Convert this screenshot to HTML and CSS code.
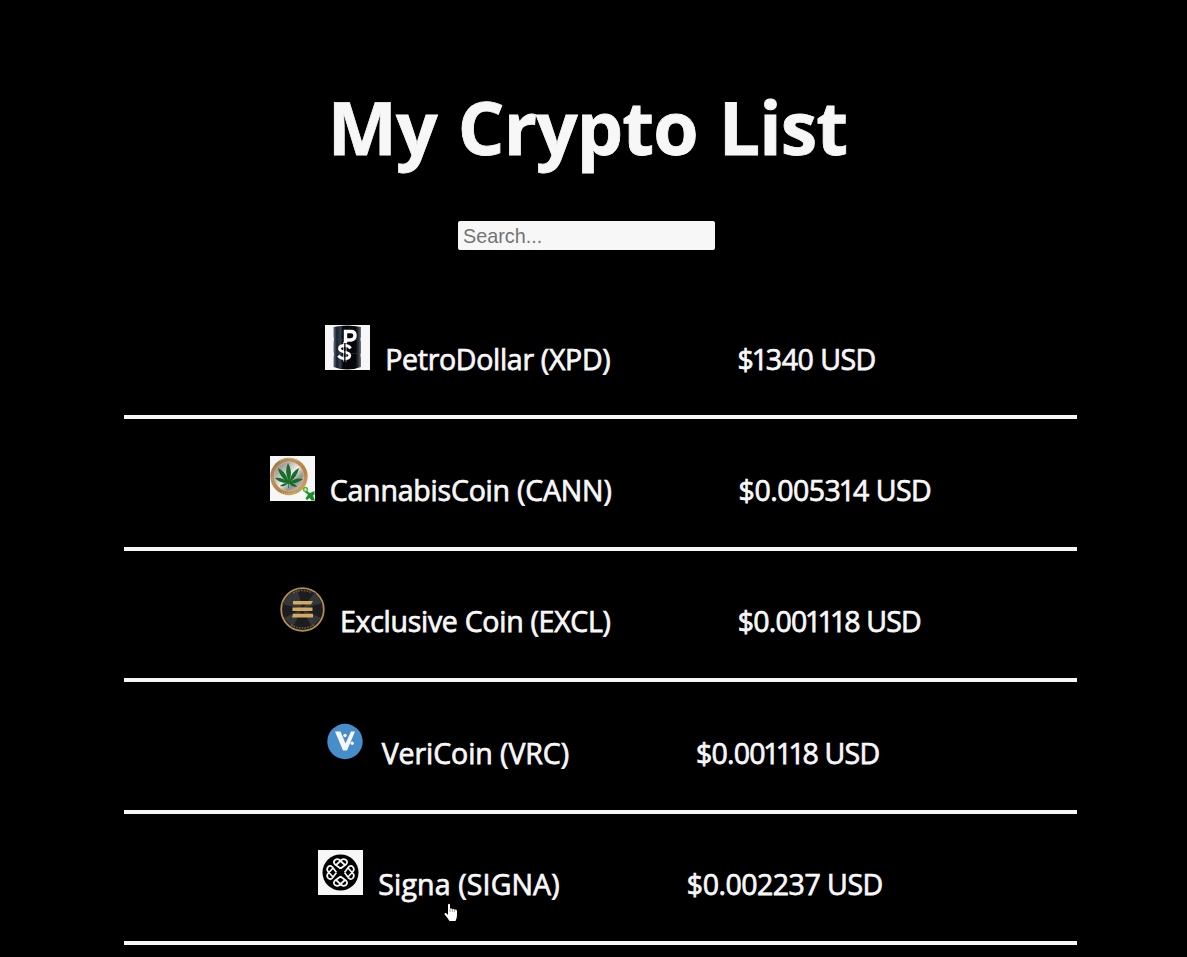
FILE: index.html
```html
<!DOCTYPE html>
<html lang="en">
<head>
<meta charset="utf-8">
<title>My Crypto List</title>
<link rel="stylesheet" href="styles.css">
</head>
<body>
<main class="page">
  <h1 class="title">My Crypto List</h1>
  <input class="search" type="text" placeholder="Search...">
  <ul class="coins">
    <li class="coin">
      <svg class="logo" viewBox="0 0 45 45">
        <defs><linearGradient id="barrel"><stop offset="0" stop-color="#657482"/><stop offset=".12" stop-color="#182028"/><stop offset=".25" stop-color="#304050"/><stop offset=".35" stop-color="#05070a"/><stop offset=".8" stop-color="#05070a"/><stop offset=".92" stop-color="#303a43"/><stop offset="1" stop-color="#777"/></linearGradient></defs>
        <rect width="45" height="45" fill="#f7f7f7"/>
        <path d="M8.500 2Q22-1 36 2V12L35.500 14 36 17V28L35.500 30 36 33V42Q22 47 8.500 42V32L9 29 8.500 27V17L9 14 8.500 12Z" fill="url(#barrel)"/>
        <path d="M9 14Q22 16 35 14M9 28Q22 30 35 28" fill="none" stroke="#303b44" stroke-width=".6"/>
        <path d="M20.500 18V6.500H26Q30 6.500 30 10.500T26 15H20.500" fill="none" stroke="#fff" stroke-width="3.400"/>
        <path d="M25.500 23.500Q24 20.500 20 20.500Q14.500 20.500 14.500 23.500Q14.500 26 19.500 27Q24.800 28 24.800 30.500Q24.500 33.500 20 33.500Q15 33.500 13.500 30.500" fill="none" stroke="#fff" stroke-width="2.800"/>
        <path d="M18.700 17V36.500M21 17V36.500" stroke="#fff" stroke-width=".8"/><path d="M19.850 19V36" stroke="#080808" stroke-width="1.300"/>
      </svg>
      <span class="name petro">PetroDollar (XPD)</span>
      <span class="price">$<span class="ones">1</span>340 USD</span>
    </li>
    <li class="coin">
      <svg class="logo" viewBox="0 0 45 45">
        <defs><linearGradient id="silver" x2="1" y2="1"><stop stop-color="#6f7072"/><stop offset=".3" stop-color="#b9b9ba"/><stop offset=".5" stop-color="#eee"/><stop offset=".7" stop-color="#929394"/><stop offset="1" stop-color="#d5d5d5"/></linearGradient><linearGradient id="rim" x2="1" y2="1"><stop stop-color="#79603d"/><stop offset=".3" stop-color="#b99361"/><stop offset=".65" stop-color="#b6813e"/><stop offset="1" stop-color="#dfbc8a"/></linearGradient></defs>
        <rect width="45" height="45" fill="#f7f7f7"/>
        <circle cx="19" cy="20.500" r="18.700" fill="url(#rim)"/>
        <circle cx="19" cy="20.500" r="14.800" fill="url(#silver)" stroke="#d9b781" stroke-width=".8"/>
        <path d="M10 5Q19 0 28 5M12 36.500Q19 39 26 36.500" fill="none" stroke="#edcf87" stroke-width="1" stroke-dasharray="1 1"/>
        <path d="M18.500 25Q14 15 18 7Q23 15 19.500 25Q22 15 29 12Q27 21 20 26Q26 21 33 23Q27 28 20 27Q25 27 27 31Q22 31 19 27.500V32H18.300V27.500Q14 31 10 30Q13 27 17.500 27Q9 27 5 22Q12 21 17.500 26Q9 20 8 12Q15 15 18.500 25Z" fill="#176c28"/>
        <circle cx="35.500" cy="33.500" r="2" fill="#cee8b9" stroke="#54be34" stroke-width="1.300"/>
        <path d="M36.500 35L40 37 44.500 35V38.500L43 39.500 45 44.500H41.500L39.500 42 37 44 35.500 42.500 38 38.500 35 36.500Z" fill="#188e2c"/>
      </svg>
      <span class="name cann">CannabisCoin (CANN)</span>
      <span class="price">$0.0053<span class="ones">1</span>4 USD</span>
    </li>
    <li class="coin">
      <svg class="logo" viewBox="0 0 45 45">
        <circle cx="22.500" cy="22.500" r="21.300" fill="#1c1d20" stroke="#b58e4e" stroke-width="1.800"/>
        <path d="M22 22L2 17 9 7 18 3ZM22 22L35 5 42 16ZM22 22L41 31 32 40ZM22 22L13 40 4 31Z" fill="#35363a"/>
        <path d="M13 6Q22 1 32 6M11 38Q22 44 34 38" fill="none" stroke="#6f603f" stroke-width="1.500" stroke-dasharray="1.500 1.300"/>
        <path d="M13 14H33L31 17.500H13ZM12.500 20.500H32.500V24H12.500ZM13 26.800H33V30.500H12Z" fill="#d2aa60"/>
      </svg>
      <span class="name excl">Exclusive Coin (EXCL)</span>
      <span class="price wide">$0.00<span class="ones">111</span>8 USD</span>
    </li>
    <li class="coin">
      <svg class="logo" viewBox="0 0 45 45">
        <circle cx="23" cy="22.500" r="17.700" fill="#468dcc"/>
        <path d="M13 12.500H18.500L23.500 24.500 29 12.500H33L25 31.500H21Z" fill="#f7f7f7"/>
        <circle cx="23" cy="16.500" r="1.700" fill="#f7f7f7"/><circle cx="30.200" cy="24.200" r="1.700" fill="#f7f7f7"/>
      </svg>
      <span class="name veri">VeriCoin (VRC)</span>
      <span class="price wide">$0.00<span class="ones">111</span>8 USD</span>
    </li>
    <li class="coin">
      <svg class="logo" viewBox="0 0 45 45">
        <defs><g id="knot" fill="none" stroke="#f7f7f7" stroke-width="1.700" stroke-linejoin="round"><path d="M22.500 18.500L16.800 14.200Q14.800 12 17 10Q19.500 8.200 21.500 10L27.500 15.500M22.500 18.500L28.200 14.200Q30.200 12 28 10Q25.500 8.200 23.500 10L17.500 15.500"/></g></defs>
        <rect width="45" height="45" fill="#f7f7f7"/>
        <circle cx="22.500" cy="22.500" r="18" fill="#000"/>
        <use href="#knot"/><use href="#knot" transform="rotate(90 22.500 22.500)"/><use href="#knot" transform="rotate(180 22.500 22.500)"/><use href="#knot" transform="rotate(270 22.500 22.500)"/>
      </svg>
      <span class="name signa">Signa (SIGNA)</span>
      <span class="price">$0.002237 USD</span>
    </li>
  </ul>
</main>
<svg class="pointer" viewBox="0 0 14 19"><path d="M4 1.500Q5 0 6 1.500V6Q7 4.500 8.200 6.200Q9.500 5 10.500 6.700Q12.500 6 13 8V12Q13 15 11.500 18H5.500Q3 14 .7 11.500Q0 9.500 2 10L4 12Z" fill="#fff"/><path d="M6 6V9M8.300 6V9M10.600 6.500V9" stroke="#444" stroke-width=".5"/></svg>
</body>
</html>
```
FILE: styles.css
```css
* { box-sizing: border-box; }
body {
  margin: 0;
  height: 957px;
  overflow: hidden;
  background: #000;
  color: #f7f7f7;
  font-family: "Open Sans", "Noto Sans", sans-serif;
}
.page {
  display: flex;
  flex-direction: column;
  align-items: center;
  padding-top: 77px;
}
.title {
  margin: 0 0 44px;
  padding-right: 12px;
  font-size: 73.300px;
  line-height: 100px;
  font-weight: 700;
  letter-spacing: -0.900px;
  word-spacing: 3px;
  white-space: nowrap;
  -webkit-text-stroke: 0.800px #f7f7f7;
}
.search {
  width: 257px;
  height: 29px;
  margin: 0 14px 38px 0;
  padding: 2px 5px 0;
  border: 0;
  border-radius: 2px;
  background: #f7f7f7;
  font: 19.800px "Liberation Sans", sans-serif;
}
.search::placeholder { color: #747474; opacity: 1; }
.coins {
  width: 953px;
  margin: 0 0 0 14px;
  padding: 0;
  list-style: none;
}
.coin {
  display: flex;
  justify-content: center;
  align-items: baseline;
  height: 131.4px;
  padding-top: 36.500px;
  border-bottom: 4px solid #f7f7f7;
  font-size: 28.500px;
  line-height: 40px;
  white-space: nowrap;
  -webkit-text-stroke: 0.750px #f7f7f7;
}
.logo { flex: none; width: 45px; height: 45px; margin-right: 15px; -webkit-text-stroke: 0; }
.name { margin-right: 127px; }
.petro { letter-spacing: -0.300px; }
.cann { letter-spacing: -0.200px; }
.excl { letter-spacing: -0.280px; }
.veri { letter-spacing: -0.070px; }
.signa { letter-spacing: 0.150px; }
.price { letter-spacing: -0.500px; }
.wide { letter-spacing: -0.800px; }
.ones { margin: 0 1.500px 0 -1.500px; letter-spacing: -3.700px; }
.pointer { position: absolute; left: 444px; top: 903px; width: 14px; height: 19px; }
```
